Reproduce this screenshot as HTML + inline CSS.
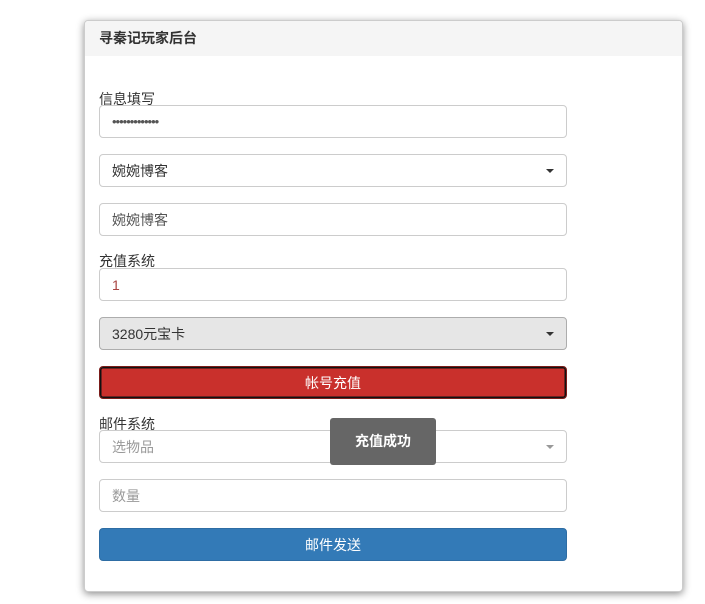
<!DOCTYPE html>
<html><head><meta charset="utf-8"><style>
body{margin:0;background:#fff;font-family:"Liberation Sans","Noto Sans CJK SC",sans-serif;font-size:14px;color:#333;width:705px;height:604px;position:relative;overflow:hidden}
.card{position:absolute;left:84px;top:20px;width:597px;height:570px;border:1px solid #ccc;border-radius:4px;box-shadow:0 2px 8px rgba(0,0,0,.45);background:#fff;overflow:hidden}
.hd{height:35px;background:#f5f5f5;font-weight:bold;font-size:14px;line-height:35px;padding-left:14px}
.el{position:absolute;left:14px;height:31px;border:1px solid #ccc;border-radius:4px;background:#fff;line-height:33px;padding-left:12px;width:454px}
.lbl{position:absolute;left:14px;font-size:14px;line-height:16px}
.caret{position:absolute;right:12px;top:14px;width:0;height:0;border-left:4px solid transparent;border-right:4px solid transparent;border-top:4px solid #333}
.btn{position:absolute;left:14px;width:468px;height:33px;border-radius:4px;color:#fff;text-align:center;line-height:32px;box-sizing:border-box}
</style></head><body>
<div class="card">
<div class="hd">寻秦记玩家后台</div>
<div class="lbl" style="top:70px">信息填写</div>
<div class="el" style="top:84px;font-size:13px;letter-spacing:-1px;color:#555;line-height:31px">•••••••••••••</div>
<div class="el" style="top:133px">婉婉博客<span class="caret"></span></div>
<div class="el" style="top:182px;color:#555">婉婉博客</div>
<div class="lbl" style="top:232px">充值系统</div>
<div class="el" style="top:247px;color:#a94442">1</div>
<div class="el" style="top:296px;background:#e6e6e6;border-color:#adadad">3280元宝卡<span class="caret"></span></div>
<div class="btn" style="top:345px;background:#c9302c;border:1px solid #7a1d1a;box-shadow:inset 0 0 0 1.5px #111">帐号充值</div>
<div class="lbl" style="top:395px">邮件系统</div>
<div class="el" style="top:409px;color:#999">选物品<span class="caret" style="border-top-color:#999"></span></div>
<div class="el" style="top:458px;color:#999">数量</div>
<div class="btn" style="top:507px;background:#337ab7;border:1px solid #2e6da4">邮件发送</div>
</div>
<div style="position:absolute;left:330px;top:418px;width:106px;height:47px;background:#666;border-radius:3px;color:#fff;font-weight:bold;text-align:center;line-height:47px">充值成功</div>
</body></html>
